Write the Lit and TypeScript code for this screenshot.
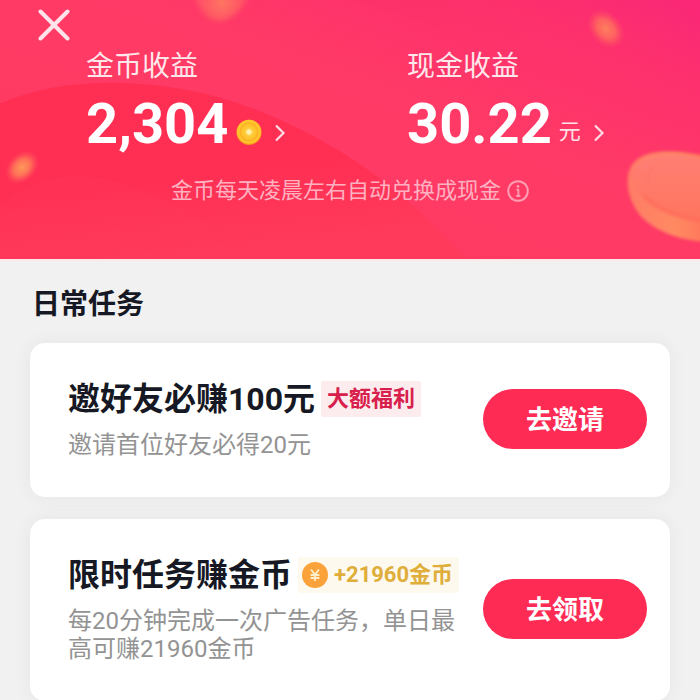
import { LitElement, html, css, svg, nothing } from "lit";
import { customElement, property } from "lit/decorators.js";

const chevron = html`<svg class="chevron" viewBox="0 0 12 18" aria-hidden="true">
  <path d="M2 1.5 9.5 9 2 16.5" fill="none" stroke="#ffdbe3" stroke-width="2.2" />
</svg>`;

const goldCoin = html`<svg class="coin" viewBox="0 0 26 26" aria-hidden="true">
  <defs>
    <radialGradient id="gold" cx="50%" cy="50%" r="50%">
      <stop offset="0" stop-color="#fff0a0" />
      <stop offset="0.5" stop-color="#ffca3a" />
      <stop offset="1" stop-color="#ffbd22" />
    </radialGradient>
  </defs>
  <circle cx="13" cy="13.4" r="12.6" fill="#fb9420" />
  <circle cx="13" cy="12.8" r="12" fill="#ffc52c" />
  <circle cx="13" cy="13" r="8.8" fill="url(#gold)" stroke="#fbb026" stroke-width="1.2" />
  <path d="M13 10 16 13 13 16 10 13Z" fill="#fff3b4" />
</svg>`;

const yuanCoin = html`<svg class="yuan" viewBox="0 0 26 26" aria-hidden="true">
  <circle cx="13" cy="13" r="13" fill="#fba33a" />
  <path d="M9 7.5 13 12.5 17 7.5M13 12.5V19M8.6 13H17.4M8.6 16H17.4" fill="none" stroke="#ffeecb" stroke-width="1.8" />
</svg>`;

const backdrop = svg`
  <defs>
    <linearGradient id="base" x1="0" y1="1" x2="1" y2="0">
      <stop offset="0" stop-color="#ff3a5e" />
      <stop offset="0.6" stop-color="#ff3a66" />
      <stop offset="0.85" stop-color="#fd2f6e" />
      <stop offset="1" stop-color="#f9237d" />
    </linearGradient>
    <linearGradient id="swell" x1="0" y1="0" x2="0.3" y2="1">
      <stop offset="0" stop-color="#ff2f54" />
      <stop offset="0.6" stop-color="#ff2f53" />
      <stop offset="1" stop-color="#ff3a5b" />
    </linearGradient>
    <linearGradient id="beam" x1="0" y1="0" x2="1" y2="1">
      <stop offset="0" stop-color="#fb2f66" />
      <stop offset="1" stop-color="#ff3a6a" stop-opacity="0" />
    </linearGradient>
    <linearGradient id="face" x1="0" y1="0" x2="0" y2="1">
      <stop offset="0" stop-color="#ff7f74" />
      <stop offset="1" stop-color="#ff745c" />
    </linearGradient>
    <linearGradient id="rim" x1="0" y1="0" x2="1" y2="0">
      <stop offset="0" stop-color="#ff7b66" />
      <stop offset="0.5" stop-color="#ff8a62" />
      <stop offset="1" stop-color="#ff6e56" />
    </linearGradient>
    <radialGradient id="glow" cx="50%" cy="50%" r="50%">
      <stop offset="0" stop-color="#ff9a58" />
      <stop offset="0.5" stop-color="#ff7d58" stop-opacity="0.85" />
      <stop offset="1" stop-color="#ff5a60" stop-opacity="0" />
    </radialGradient>
    <radialGradient id="ember" gradientUnits="userSpaceOnUse" cx="222" cy="2" r="34">
      <stop offset="0" stop-color="#ff7a62" />
      <stop offset="1" stop-color="#ff5564" stop-opacity="0.4" />
    </radialGradient>
    <filter id="soft"><feGaussianBlur stdDeviation="1.5" /></filter>
    <filter id="softer"><feGaussianBlur stdDeviation="2.5" /></filter>
  </defs>
  <rect width="700" height="260" fill="url(#base)" />
  <path d="M350 0H700V120C620 100 560 92 500 58C450 30 400 14 350 0Z" fill="url(#beam)" opacity="0.5" />
  <path d="M0 104C60 76 150 78 220 98C320 128 400 185 466 260H0Z" fill="url(#swell)" />
  <path d="M0 204C60 160 110 176 170 204C210 224 240 244 256 260H0Z" fill="#ff3a5a" opacity="0.2" />
  <path d="M194 -4C200 14 210 22 222 21C234 18 244 8 248 -4Z" fill="url(#ember)" filter="url(#softer)" />
  <ellipse cx="22" cy="168" rx="19" ry="14" transform="rotate(-45 22 168)" fill="url(#glow)" />
  <ellipse cx="606" cy="29" rx="22" ry="16" transform="rotate(48 606 29)" fill="url(#glow)" opacity="0.75" />
  <g filter="url(#soft)">
    <path d="M629 172C633 158 648 152 668 152C686 152 702 155 720 161V243C690 244 662 236 644 220C633 210 624 190 629 172Z" fill="url(#rim)" />
    <path d="M631 176C636 160 650 155 668 155C686 155 702 158 720 164V226C684 224 636 212 631 176Z" fill="url(#face)" />
    <path d="M644 196C656 210 684 220 720 224" fill="none" stroke="#ff6c5a" stroke-width="3" opacity="0.8" />
    <path d="M648 188C645 172 654 163 672 162C690 161 706 164 720 169" fill="none" stroke="#ff7264" stroke-width="2" opacity="0.4" />
  </g>
`;

@customElement("earning-stat")
class EarningStat extends LitElement {
  @property() label = "";
  @property() amount = "";
  @property() unit = "";

  static styles = css`
    :host { display: block; }
    .label { margin: 0; font-size: 28px; line-height: 32px; color: #ffe6eb; }
    .value {
      display: flex; align-items: center; margin-top: 9px; height: 64px;
      color: #fff; text-decoration: none; white-space: nowrap;
    }
    .amount { font: 700 56px/64px Roboto, "Noto Sans CJK SC", sans-serif; }
    .unit { margin: 16px 12px 0 7px; font-size: 22px; line-height: 26px; color: #ffe0e7; }
    .coin { flex: none; width: 26px; height: 26px; margin: 16px 12px 0 8px; }
    .chevron { flex: none; width: 12px; height: 18px; margin-top: 18px; }
  `;

  render() {
    return html`
      <p class="label" id="label">${this.label}</p>
      <a class="value" href="#" aria-describedby="label">
        <span class="amount">${this.amount}</span>
        ${this.unit ? html`<span class="unit">${this.unit}</span>` : goldCoin}
        ${chevron}
      </a>
    `;
  }
}

@customElement("task-card")
class TaskCard extends LitElement {
  @property() heading = "";
  @property() detail = "";
  @property() action = "";
  @property() tag = "";
  @property() reward = "";

  static styles = css`
    :host { display: block; }
    .card {
      display: flex; align-items: center; gap: 20px;
      padding: 36px 23px 38px 38px; border-radius: 15px;
      background: #fff; box-shadow: 0 0 20px rgba(0, 0, 0, 0.05);
    }
    .body { flex: 1; min-width: 0; }
    .title { display: flex; align-items: center; gap: 6px; }
    h3 { margin: 0; font-size: 32px; line-height: 40px; font-weight: 700; color: #161823; white-space: nowrap; }
    .tag, .reward {
      display: flex; align-items: center; padding: 0 6px;
      font-size: 22px; line-height: 36px; font-weight: 700; white-space: nowrap; border-radius: 2px;
    }
    .tag { background: #fdecee; color: #d8204c; }
    .reward { padding-left: 4px; gap: 6px; background: #fef9ee; color: #dfae3a; }
    .yuan { flex: none; width: 26px; height: 26px; }
    .detail { margin: 12px 0 0; font-size: 24px; line-height: 28px; font-weight: 400; color: #939393; }
    button {
      flex: none; width: 164px; height: 60px; padding: 0 0 4px; border: 0; border-radius: 30px;
      background: #fe2c55; color: #fff; font: inherit; font-size: 26px; font-weight: 700; cursor: pointer;
    }
  `;

  render() {
    return html`
      <article class="card">
        <div class="body">
          <div class="title">
            <h3>${this.heading}</h3>
            ${this.tag ? html`<span class="tag">${this.tag}</span>` : nothing}
            ${this.reward ? html`<span class="reward">${yuanCoin}${this.reward}</span>` : nothing}
          </div>
          <p class="detail">${this.detail}</p>
        </div>
        <button type="button">${this.action}</button>
      </article>
    `;
  }
}

@customElement("app-root")
class AppRoot extends LitElement {
  static styles = css`
    :host {
      display: block; min-height: 100vh; background: #f1f1f1;
      font-family: Roboto, "Noto Sans CJK SC", sans-serif;
    }
    .hero { position: relative; padding: 9px 0 53px; overflow: hidden; background: #ff3560; }
    .backdrop { position: absolute; inset: 0; width: 100%; height: 100%; }
    .content { position: relative; }
    .close {
      display: block; width: 32px; height: 32px; margin-left: 38px; padding: 0;
      border: 0; background: none; cursor: pointer;
    }
    .close svg { display: block; width: 32px; height: 32px; }
    .stats {
      display: grid; grid-template-columns: 1fr 1fr; column-gap: 28px;
      margin-top: 10px; padding-left: 86px;
    }
    .note {
      display: flex; justify-content: center; align-items: center; gap: 6px;
      margin: 20px 0 0; font-size: 22px; line-height: 30px; color: #ffb0c1;
    }
    .info { width: 22px; height: 22px; }
    .tasks { padding: 26px 30px 0; border-top: 2px solid #fbe9ea; }
    h2 { margin: 0 0 20px 2px; font-size: 28px; line-height: 36px; font-weight: 700; color: #161823; }
    .list { display: grid; gap: 22px; }
  `;

  render() {
    return html`
      <header class="hero">
        <svg class="backdrop" viewBox="0 0 700 260" preserveAspectRatio="none" aria-hidden="true">${backdrop}</svg>
        <div class="content">
          <button class="close" type="button" aria-label="关闭">
            <svg viewBox="0 0 32 32" aria-hidden="true">
              <path d="M2.5 2.5 29.5 29.5M29.5 2.5 2.5 29.5" stroke="#ffe3ea" stroke-width="4" stroke-linecap="round" />
            </svg>
          </button>
          <div class="stats">
            <earning-stat label="金币收益" amount="2,304"></earning-stat>
            <earning-stat label="现金收益" amount="30.22" unit="元"></earning-stat>
          </div>
          <p class="note">
            金币每天凌晨左右自动兑换成现金
            <svg class="info" viewBox="0 0 22 22" aria-hidden="true">
              <circle cx="11" cy="11" r="9.8" fill="none" stroke="#ff9db2" stroke-width="2" />
              <circle cx="11" cy="6.4" r="1.4" fill="#ff9db2" />
              <path d="M9.4 9.6H11.4V16M9.2 16H13.4" fill="none" stroke="#ff9db2" stroke-width="1.8" />
            </svg>
          </p>
        </div>
      </header>
      <main class="tasks">
        <h2>日常任务</h2>
        <div class="list">
          <task-card heading="邀好友必赚100元" tag="大额福利" detail="邀请首位好友必得20元" action="去邀请"></task-card>
          <task-card heading="限时任务赚金币" reward="+21960金币" detail="每20分钟完成一次广告任务，单日最高可赚21960金币" action="去领取"></task-card>
        </div>
      </main>
    `;
  }
}
